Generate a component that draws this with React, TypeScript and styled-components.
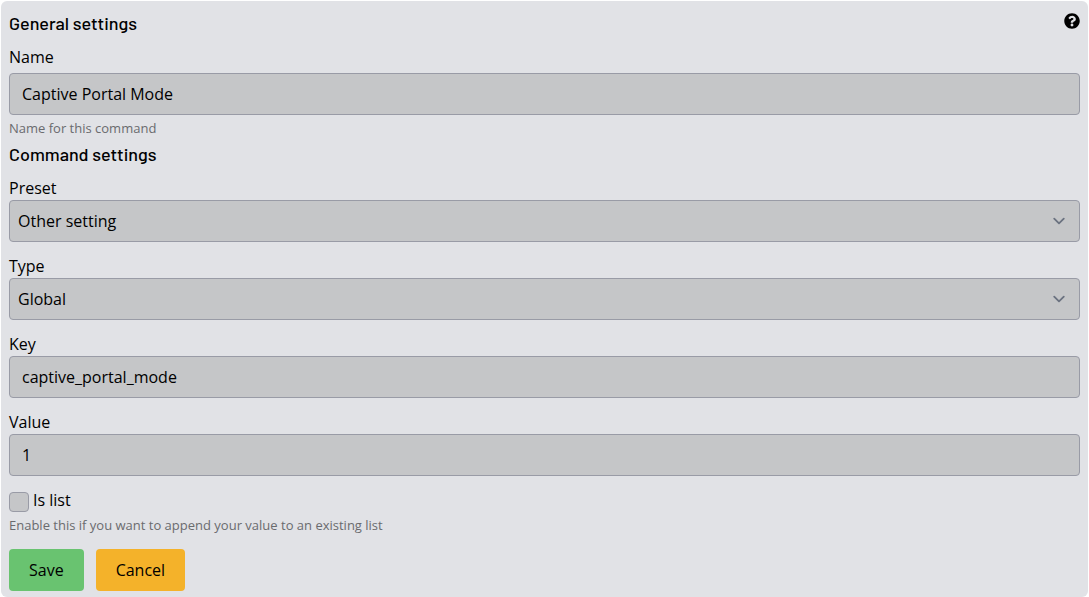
import React from "react";
import styled, { createGlobalStyle, css } from "styled-components";
import { FaQuestionCircle } from "react-icons/fa";

const GlobalStyle = createGlobalStyle`
  *, *::before, *::after { box-sizing: border-box; }
  body {
    margin: 0;
    padding: 1px;
    background: #ffffff;
    color: #000000;
    font: 16px/24px "Open Sans", "Noto Sans", sans-serif;
  }
`;

const Panel = styled.form`
  padding: 10px 8px 6px;
  border-radius: 6px;
  background: #e1e2e6;
`;

const PanelHeader = styled.header`
  display: flex;
  justify-content: space-between;
  align-items: flex-start;
`;

const Heading = styled.h2`
  margin: 0;
  font: 500 18px/24px Barlow, Roboto, sans-serif;
`;

const HelpButton = styled.button`
  display: flex;
  margin: 2px 0 0;
  padding: 0;
  border: 0;
  background: none;
  color: #000000;
  font-size: 16px;
  cursor: pointer;
`;

const FieldGroup = styled.div`
  display: grid;
  gap: 12px;
  padding-top: 10px;
`;

const CommandSection = styled.section`
  padding-top: 4px;
`;

const Field = styled.div<{ $gap?: number }>`
  display: grid;
  gap: ${(p) => p.$gap ?? 0}px;
`;

const Hint = styled.p`
  margin: 0;
  padding-top: 3px;
  color: #6a6b6e;
  font-size: 13px;
  line-height: 20px;
`;

const controlBox = css`
  width: 100%;
  height: 42px;
  margin: 0;
  border: 1px solid #999ba6;
  border-radius: 4px;
  background: #c5c6c8;
  color: #000000;
  font: inherit;
`;

const TextInput = styled.input`
  ${controlBox}
  padding: 8px 12px;
`;

const SelectWrap = styled.div`
  position: relative;
`;

const Select = styled.select`
  ${controlBox}
  display: block;
  padding: 8px 40px 8px 8px;
  appearance: none;
`;

const Chevron = styled.svg`
  position: absolute;
  right: 9px;
  top: 9px;
  width: 24px;
  height: 24px;
  fill: none;
  stroke: #6b7280;
  stroke-width: 1.5;
  stroke-linecap: round;
  stroke-linejoin: round;
  pointer-events: none;
`;

const CheckRow = styled.div`
  display: flex;
  align-items: flex-end;
  gap: 4px;
`;

const Checkbox = styled.input`
  appearance: none;
  width: 20px;
  height: 20px;
  margin: 0;
  border: 1px solid #999ba6;
  border-radius: 4px;
  background: #c5c6c8;

  &:checked {
    background: #6b7280;
  }
`;

const Actions = styled.div`
  display: flex;
  gap: 12px;
  padding-top: 14px;
`;

const Button = styled.button<{ $tone: string }>`
  height: 42px;
  padding: 0 20px;
  border: 0;
  border-radius: 4px;
  background: ${(p) => p.$tone};
  color: #000000;
  font: inherit;
  cursor: pointer;
`;

function SelectField({ id, label, options }: { id: string; label: string; options: string[] }) {
  return (
    <Field>
      <label htmlFor={id}>{label}</label>
      <SelectWrap>
        <Select id={id}>
          {options.map((o) => (
            <option key={o}>{o}</option>
          ))}
        </Select>
        <Chevron viewBox="0 0 20 20" aria-hidden="true">
          <path d="M6 8l4 4 4-4" />
        </Chevron>
      </SelectWrap>
    </Field>
  );
}

function TextField({
  id,
  label,
  value,
  gap,
  hint,
}: {
  id: string;
  label: string;
  value: string;
  gap?: number;
  hint?: string;
}) {
  return (
    <div>
      <Field $gap={gap}>
        <label htmlFor={id}>{label}</label>
        <TextInput id={id} type="text" defaultValue={value} />
      </Field>
      {hint && <Hint>{hint}</Hint>}
    </div>
  );
}

export default function App() {
  return (
    <>
      <GlobalStyle />
      <Panel onSubmit={(e) => e.preventDefault()}>
        <section>
          <PanelHeader>
            <Heading>General settings</Heading>
            <HelpButton type="button" aria-label="Help">
              <FaQuestionCircle />
            </HelpButton>
          </PanelHeader>
          <FieldGroup>
            <TextField
              id="name"
              label="Name"
              value="Captive Portal Mode"
              gap={4}
              hint="Name for this command"
            />
          </FieldGroup>
        </section>
        <CommandSection>
          <Heading>Command settings</Heading>
          <FieldGroup>
            <SelectField id="preset" label="Preset" options={["Other setting"]} />
            <SelectField id="type" label="Type" options={["Global"]} />
            <TextField id="key" label="Key" value="captive_portal_mode" />
            <TextField id="value" label="Value" value="1" />
            <div>
              <CheckRow>
                <Checkbox id="is-list" type="checkbox" />
                <label htmlFor="is-list">Is list</label>
              </CheckRow>
              <Hint>Enable this if you want to append your value to an existing list</Hint>
            </div>
          </FieldGroup>
        </CommandSection>
        <Actions>
          <Button type="submit" $tone="#69c370">Save</Button>
          <Button type="button" $tone="#f4b22a">Cancel</Button>
        </Actions>
      </Panel>
    </>
  );
}
